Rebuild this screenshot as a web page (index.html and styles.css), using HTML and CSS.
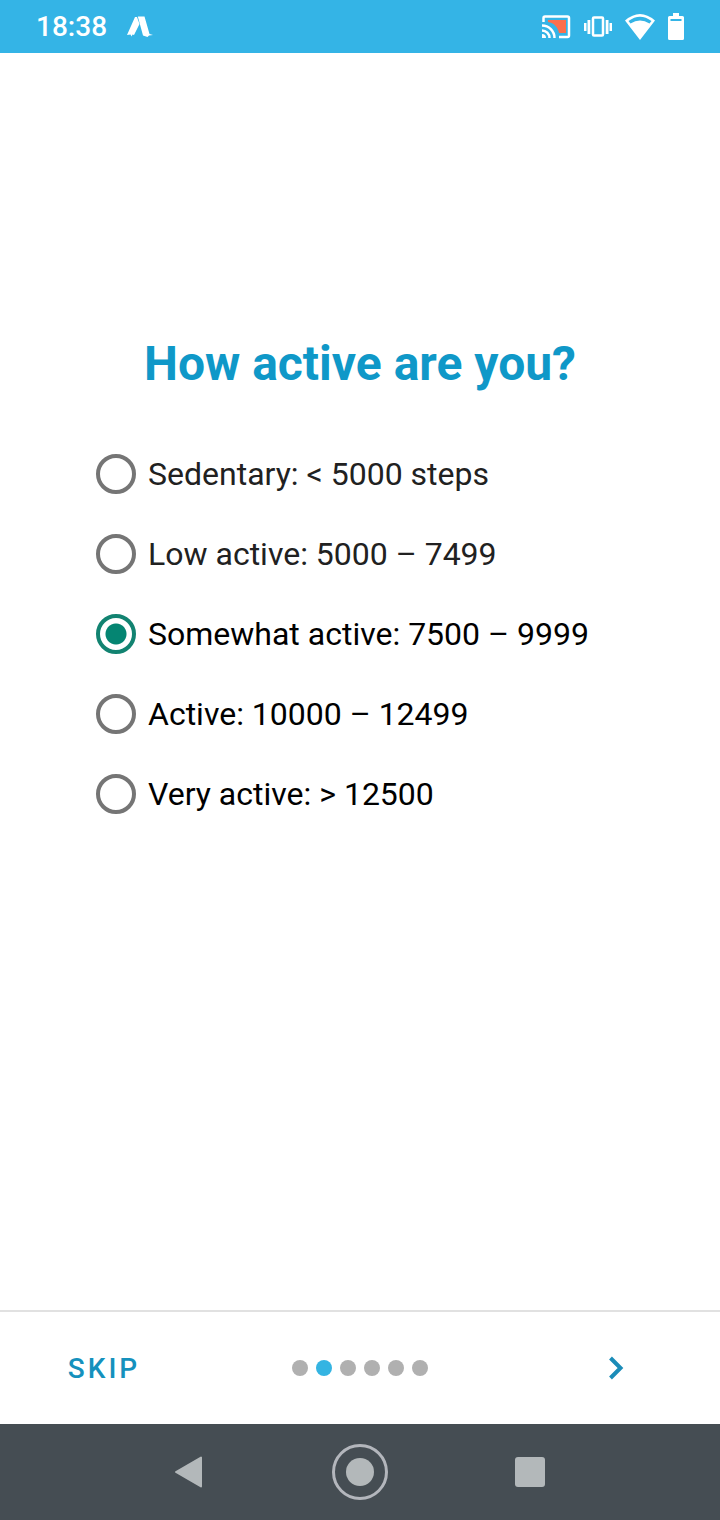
FILE: index.html
```html
<!DOCTYPE html>
<html lang="en">
<head>
<meta charset="utf-8">
<meta name="viewport" content="width=device-width, initial-scale=1">
<title>How active are you?</title>
<link rel="stylesheet" href="styles.css">
</head>
<body>
<header class="status">
  <div class="status-group">
    <time class="clock">18:38</time>
    <svg class="app-mark" width="26" height="22" viewBox="0 0 26 22" aria-hidden="true">
      <path d="M8 1H10L12.500 8L7 19L5.500 18.500L4.500 20.500L3.500 18.500L0 19Z"/>
      <path d="M10.800 0.500H17.500L22.500 18L26 19L22 19.500L20.500 21L16 19.500Z"/>
    </svg>
  </div>
  <div class="status-group status-icons">
    <svg width="29" height="24" viewBox="0 0 29 24" aria-hidden="true">
      <path class="cast-fill" d="M6 5H24V18H17C16 12 12 8 6 7Z"/>
      <path class="line" d="M1.500 7V3Q1.500 1.500 3 1.500H25.500Q27 1.500 27 3V20.500Q27 22 25.500 22H17"/>
      <path class="line" d="M0 10.500A12.500 12.500 0 0 1 12.500 23M0 15.500A7.500 7.500 0 0 1 7.500 23"/>
      <path d="M0 19A4 4 0 0 1 4 23H0Z"/>
    </svg>
    <svg width="28" height="22" viewBox="0 0 28 22" aria-hidden="true">
      <rect class="line" x="9" y="1.500" width="10" height="18" rx="1"/>
      <path d="M0 7H2.500V15H0ZM3.500 4H6.300V18H3.500ZM21.700 4H24.500V18H21.700ZM25.500 7H28V15H25.500Z"/>
    </svg>
    <svg width="30" height="26" viewBox="0 0 30 26" aria-hidden="true">
      <path fill-rule="evenodd" d="M0 6.500Q15 -6.500 30 6.500L15 26ZM3.500 7L5.500 9.500Q15 3.500 24.500 9.500L26.500 7Q15 -1.500 3.500 7Z"/>
    </svg>
    <svg width="16" height="27" viewBox="0 0 16 27" aria-hidden="true">
      <path fill-rule="evenodd" d="M5 0H11V3H14.500Q16 3 16 4.500V25.500Q16 27 14.500 27H1.500Q0 27 0 25.500V4.500Q0 3 1.500 3H5ZM2.500 6V8H13.500V6Z"/>
    </svg>
  </div>
</header>

<main class="content">
  <h1 class="title" id="question">How active are you?</h1>
  <div class="options" role="radiogroup" aria-labelledby="question">
    <label class="option option-soft"><input class="radio" type="radio" name="activity">Sedentary: &lt; 5000 steps</label>
    <label class="option option-soft"><input class="radio" type="radio" name="activity">Low active: 5000 – 7499</label>
    <label class="option"><input class="radio" type="radio" name="activity" checked>Somewhat active: 7500 – 9999</label>
    <label class="option"><input class="radio" type="radio" name="activity">Active: 10000 – 12499</label>
    <label class="option"><input class="radio" type="radio" name="activity">Very active: &gt; 12500</label>
  </div>
</main>

<footer class="pager">
  <button class="pager-button" type="button">SKIP</button>
  <div class="dots" role="img" aria-label="Step 2 of 6">
    <span class="dot"></span><span class="dot dot-current"></span><span class="dot"></span><span class="dot"></span><span class="dot"></span><span class="dot"></span>
  </div>
  <button class="pager-button" type="button" aria-label="Next">
    <svg width="16" height="26" viewBox="0 0 16 26" aria-hidden="true">
      <path class="chevron" d="M2.500 3L12.500 13L2.500 23"/>
    </svg>
  </button>
</footer>

<nav class="system" aria-label="System">
  <button class="system-button" type="button" aria-label="Back">
    <svg width="32" height="34" viewBox="0 0 32 34" aria-hidden="true"><path class="back" d="M27 2.500V31.500L2 17Z"/></svg>
  </button>
  <button class="system-button" type="button" aria-label="Home">
    <svg width="56" height="56" viewBox="0 0 56 56" aria-hidden="true"><circle class="home-ring" cx="28" cy="28" r="26.500"/><circle cx="28" cy="28" r="14"/></svg>
  </button>
  <button class="system-button" type="button" aria-label="Recent apps">
    <svg width="30" height="30" viewBox="0 0 30 30" aria-hidden="true"><rect width="30" height="30" rx="3"/></svg>
  </button>
</nav>
</body>
</html>
```

FILE: styles.css
```css
* {
  box-sizing: border-box;
}

body {
  margin: 0;
  min-height: 100vh;
  display: flex;
  flex-direction: column;
  background: #fff;
  color: #000;
  font-family: Roboto, "Liberation Sans", sans-serif;
}

button {
  border: 0;
  padding: 0;
  background: none;
  font: inherit;
  cursor: pointer;
}

svg {
  display: block;
}

.status {
  display: flex;
  justify-content: space-between;
  align-items: center;
  height: 53px;
  padding: 0 36px;
  background: #34b4e6;
  color: #fff;
}

.status-group {
  display: flex;
  align-items: center;
  gap: 20px;
}

.status-icons {
  gap: 13px;
}

.status svg {
  fill: #fff;
}

.status .line {
  fill: none;
  stroke: #fff;
  stroke-width: 2.5;
}

.status .cast-fill {
  fill: #fb6f4c;
}

.clock {
  font-size: 28px;
  font-weight: 500;
  line-height: 32px;
}

.content {
  flex: 1;
  padding: 283px 96px 40px;
}

.title {
  margin: 0 0 42px;
  color: #0f98c8;
  font-size: 48px;
  font-weight: 700;
  line-height: 56px;
  text-align: center;
}

.options {
  display: flex;
  flex-direction: column;
}

.option {
  display: flex;
  align-items: center;
  gap: 12px;
  min-height: 80px;
  font-size: 32px;
  line-height: 40px;
  cursor: pointer;
}

.option-soft {
  color: #212121;
}

.radio {
  appearance: none;
  flex: none;
  width: 40px;
  height: 40px;
  margin: 0;
  border: 4px solid #757575;
  border-radius: 50%;
}

.radio:checked {
  border-color: #128371;
  background: radial-gradient(circle, #058572 10px, transparent 11px);
}

.pager {
  display: grid;
  grid-template-columns: 208px 1fr 208px;
  align-items: center;
  height: 114px;
  border-top: 2px solid #e1e1e1;
}

.pager-button {
  display: flex;
  justify-content: center;
  align-items: center;
  height: 96px;
  color: #1591bd;
  font-size: 28px;
  font-weight: 500;
  letter-spacing: 3px;
}

.chevron {
  fill: none;
  stroke: #1b8cb8;
  stroke-width: 4;
}

.dots {
  display: flex;
  justify-content: center;
  gap: 8px;
}

.dot {
  width: 16px;
  height: 16px;
  border-radius: 50%;
  background: #b0b0b0;
}

.dot-current {
  background: #34b4e2;
}

.system {
  display: flex;
  justify-content: center;
  height: 96px;
  background: #454d53;
}

.system-button {
  display: flex;
  justify-content: center;
  align-items: center;
  width: 170px;
}

.system svg {
  fill: #b3b8ba;
}

.back {
  stroke: #b3b8ba;
  stroke-width: 2;
  stroke-linejoin: round;
}

.system .home-ring {
  fill: none;
  stroke: #b3b6bc;
  stroke-width: 3;
}
```
